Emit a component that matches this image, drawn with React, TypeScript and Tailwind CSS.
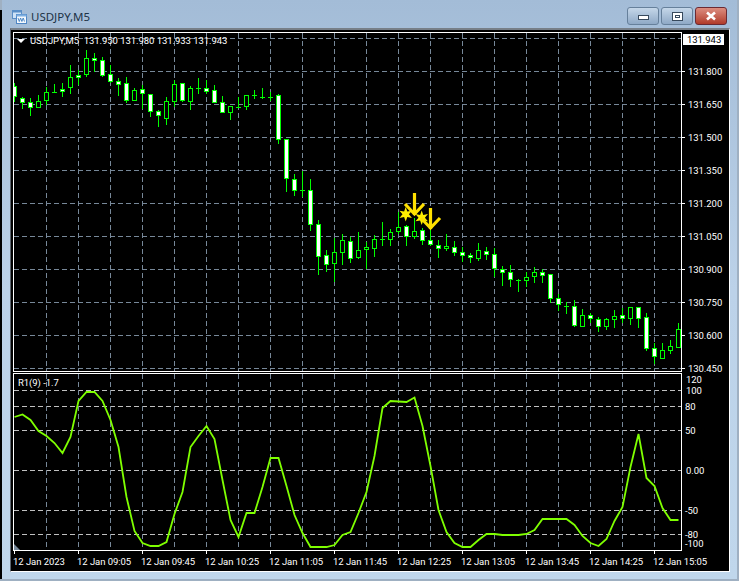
const candles: [number, number, number, number, number][] = [
  [83, 102, 86, 96, 1], [97, 109, 98, 102, 1], [98, 116, 102, 107, 1], [95, 108, 101, 107, 0],
  [87, 105, 92, 100, 0], [84, 93, 92, 92, 2], [83, 97, 89, 91, 1], [65, 94, 77, 87, 0],
  [70, 85, 75, 77, 1], [50, 77, 58, 74, 0], [53, 72, 58, 60, 1], [57, 77, 60, 75, 1],
  [65, 83, 74, 81, 1], [78, 96, 81, 84, 1], [77, 103, 83, 100, 1], [88, 101, 90, 100, 0],
  [85, 109, 89, 93, 1], [94, 117, 94, 111, 1], [110, 127, 111, 115, 1], [97, 125, 101, 118, 0],
  [80, 107, 84, 101, 0], [83, 102, 83, 100, 1], [86, 110, 88, 101, 0], [78, 94, 88, 88, 2],
  [80, 94, 88, 91, 1], [85, 103, 90, 102, 1], [96, 113, 102, 112, 1], [106, 120, 106, 112, 0],
  [97, 108, 107, 107, 2], [95, 110, 95, 106, 0], [90, 99, 95, 95, 2], [88, 99, 97, 97, 2],
  [92, 101, 97, 97, 2], [94, 144, 95, 139, 1], [139, 192, 139, 178, 1], [174, 196, 179, 190, 1],
  [171, 197, 190, 190, 2], [179, 231, 190, 224, 1], [220, 275, 224, 256, 1], [250, 272, 255, 264, 1],
  [238, 282, 252, 263, 0], [234, 265, 240, 252, 0], [237, 263, 241, 258, 1], [232, 259, 250, 257, 0],
  [242, 269, 247, 249, 0], [235, 257, 239, 248, 0], [222, 246, 239, 239, 2], [229, 246, 232, 239, 0],
  [212, 234, 227, 231, 0], [225, 246, 226, 236, 1], [218, 239, 231, 236, 0], [228, 245, 230, 240, 1],
  [230, 246, 240, 244, 1], [240, 258, 245, 248, 1], [234, 251, 246, 248, 0], [241, 256, 247, 252, 1],
  [247, 262, 252, 255, 1], [253, 263, 255, 257, 1], [243, 261, 250, 258, 0], [247, 260, 251, 254, 1],
  [248, 277, 254, 268, 1], [266, 286, 269, 272, 1], [265, 287, 272, 279, 1], [279, 292, 280, 280, 2],
  [272, 287, 277, 280, 0], [267, 283, 272, 276, 0], [269, 283, 272, 275, 1], [274, 303, 274, 298, 1],
  [294, 311, 298, 304, 1], [302, 314, 306, 306, 2], [300, 327, 306, 325, 1], [309, 327, 315, 326, 0],
  [313, 323, 315, 318, 1], [317, 332, 319, 326, 1], [318, 330, 319, 326, 0], [310, 328, 316, 319, 0],
  [308, 323, 315, 318, 1], [307, 325, 307, 318, 0], [307, 328, 307, 318, 1], [313, 351, 317, 348, 1],
  [343, 364, 348, 356, 1], [343, 359, 350, 358, 0], [340, 354, 346, 350, 0], [323, 348, 329, 347, 0],
];

const r1 = [
  417, 414.5, 420, 431, 436, 443, 453, 437, 401, 392, 392, 401, 420, 447, 497, 531, 543, 546, 546, 542,
  514, 492, 447, 436, 426, 439, 480, 520, 537, 513, 513, 487, 458, 458, 486, 515, 533, 547, 547, 547,
  545, 535, 532, 513, 492, 456, 408, 401, 401.5, 402, 397.5, 426, 466, 510, 532, 543, 547, 547, 540, 534,
  534, 535, 535, 535, 534, 530, 519, 519, 519, 519, 525, 536, 543, 546, 539, 521, 507, 467, 434, 478,
  486, 508, 520, 520,
];

const gridX = Array.from({ length: 20 }, (_, i) => 46 + i * 32);
const priceY = [38, 71, 104, 137, 170, 203, 236, 269, 302, 335, 368];
const levelY = [390, 406, 430, 470, 510, 534];

const prices = ["131.800", "131.650", "131.500", "131.350", "131.200", "131.050", "130.900", "130.750", "130.600", "130.450"];
const times = ["2023", "09:05", "09:45", "10:25", "11:05", "11:45", "12:25", "13:05", "13:45", "14:25", "15:05"];

function VerticalGrid({ y1, y2 }: { y1: number; y2: number }) {
  return (
    <>
      {gridX.map((x) => (
        <line key={x} x1={x + 0.5} x2={x + 0.5} y1={y1} y2={y2} stroke="#778899" strokeDasharray="5 3" />
      ))}
    </>
  );
}

function Star({ x, y }: { x: number; y: number }) {
  const pts = Array.from({ length: 12 }, (_, i) => {
    const a = (i * Math.PI) / 6 - Math.PI / 2;
    const r = i % 2 ? 3.2 : 7.2;
    return `${x + r * Math.cos(a)},${y + r * Math.sin(a)}`;
  }).join(" ");
  return <polygon points={pts} fill="#ffee00" />;
}

function Arrow({ x, top, tip }: { x: number; top: number; tip: number }) {
  return (
    <g fill="none" stroke="#ffe000" strokeWidth="3.2">
      <line x1={x} x2={x} y1={top} y2={tip - 1} />
      <polyline points={`${x - 9.5},${tip - 12} ${x},${tip - 2} ${x + 9.5},${tip - 12}`} />
    </g>
  );
}

function PriceChart() {
  return (
    <svg className="block h-[338px] w-[667px]" viewBox="14 33 667 338">
      <g shapeRendering="crispEdges">
        {priceY.map((y) => (
          <line key={y} x1="14" x2="681" y1={y + 0.5} y2={y + 0.5} stroke="#778899" strokeDasharray="5 3" />
        ))}
        <VerticalGrid y1={33} y2={371} />
        {candles.map(([wt, wb, bt, bb, kind], i) => {
          const c = 14 + i * 8;
          return (
            <g key={i}>
              <line x1={c + 0.5} x2={c + 0.5} y1={wt} y2={wb} stroke="#00ff00" />
              {kind === 2 ? (
                <line x1={c - 2} x2={c + 3} y1={bt + 0.5} y2={bt + 0.5} stroke="#00ff00" />
              ) : (
                <rect x={c - 1.5} y={bt + 0.5} width="4" height={bb - bt} fill={kind === 1 ? "#ffffff" : "#000000"} stroke="#00ff00" />
              )}
            </g>
          );
        })}
      </g>
      <Star x={405.7} y={214.3} />
      <Star x={421.7} y={217.7} />
      <Arrow x={414.5} top={193} tip={216} />
      <Arrow x={430.5} top={208} tip={230} />
    </svg>
  );
}

function IndicatorChart() {
  return (
    <svg className="block h-[176px] w-[667px]" viewBox="14 374 667 176">
      <g shapeRendering="crispEdges">
        {levelY.map((y) => (
          <line key={y} x1="14" x2="681" y1={y + 0.5} y2={y + 0.5} stroke="#c0c0c0" strokeDasharray="5 3" />
        ))}
        <VerticalGrid y1={374} y2={550} />
      </g>
      <polyline
        points={r1.map((y, i) => `${14.5 + i * 8},${y}`).join(" ")}
        fill="none"
        stroke="#7fff00"
        strokeWidth="1.8"
      />
      <polygon points="14,544 14,550 20,550" fill="#778899" />
    </svg>
  );
}

export default function App() {
  return (
    <div className="flex h-[581px] w-[739px] overflow-hidden bg-[#9fb0c2] font-['Roboto',sans-serif] text-[9.5px] leading-[11px] tracking-[-0.05px] text-white">
      <div className="mt-[10px] mb-[2px] w-[2px] bg-black" />

      <div className="flex h-[579px] w-[735px] flex-col bg-gradient-to-b from-[#a3bcd7] via-[#bcd2e9] to-[#c0d7ec]">
        {/* title bar */}
        <div className="flex h-[28px] shrink-0 items-start pl-[10px]">
          <svg className="mt-[10px] h-[14px] w-[15px]" viewBox="0 0 15 14">
            <rect x="0.5" y="0.5" width="9" height="8" fill="#cfe3f7" stroke="#5b8fc7" />
            <rect x="0.5" y="0.5" width="9" height="2" fill="#5b8fc7" />
            <rect x="4.5" y="4.5" width="10" height="9" fill="#f4f8fd" stroke="#4f86c4" />
            <rect x="4.5" y="4.5" width="10" height="2" fill="#7fb0e2" />
            <path d="M6 8l1.3 3.5L8.6 8l1.3 3.5L11.2 8l1.3 3.5" fill="none" stroke="#3f7fc0" strokeWidth="0.9" />
          </svg>
          <span className="mt-[8px] ml-[4px] font-['Noto_Sans',sans-serif] text-[11.5px] leading-[18px] tracking-normal text-[#1d3347]">USDJPY,M5</span>
          <div className="mt-[7px] ml-auto mr-[10px] flex gap-[2px]">
            <button className="flex h-[18px] w-[32px] items-center justify-center rounded-[3px] border border-[#66809b] bg-gradient-to-b from-[#c5d7e9] to-[#8fa9c6]">
              <span className="mt-[3px] h-[5px] w-[11px] border border-[#37495c] bg-white" />
            </button>
            <button className="flex h-[18px] w-[32px] items-center justify-center rounded-[3px] border border-[#66809b] bg-gradient-to-b from-[#c5d7e9] to-[#8fa9c6]">
              <span className="flex h-[9px] w-[11px] items-center justify-center border border-[#37495c] bg-white">
                <span className="h-[3px] w-[5px] border border-[#37495c]" />
              </span>
            </button>
            <button className="flex h-[18px] w-[32px] items-center justify-center rounded-[3px] border border-[#6b2a33] bg-gradient-to-b from-[#dc8d80] to-[#b03a2a]">
              <svg className="h-[10px] w-[12px]" viewBox="0 0 12 10">
                <path d="M2 1.5l8 7M10 1.5l-8 7" stroke="#ffffff" strokeWidth="2.6" fill="none" />
              </svg>
            </button>
          </div>
        </div>

        {/* client area */}
        <div className="ml-[8px] mr-[7px] border-t-[2px] border-l border-b border-r border-t-[#777f88] border-l-[#5d6670] border-b-white border-r-white bg-black">
          <div className="flex h-[541px] w-[717px] pl-[2px] pt-[2px]">
            <div className="flex w-[669px] flex-col">
              <div className="relative h-[340px] border border-white">
                <PriceChart />
                <div className="absolute left-[3px] top-[2px] flex h-[11px] items-center gap-[5px] whitespace-pre">
                  <svg className="h-[4px] w-[8px]" viewBox="0 0 8 4">
                    <path d="M0 0h8L4 4z" fill="#ffffff" />
                  </svg>
                  <span>USDJPY,M5  131.950 131.980 131.933 131.943</span>
                </div>
              </div>
              <div className="relative mt-[1px] h-[178px] border border-white">
                <IndicatorChart />
                <span className="absolute left-[4px] top-[3px]">R1(9) -1.7</span>
              </div>
              <div className="flex h-[20px]">
                {times.map((t) => (
                  <div key={t} className="w-[64px] shrink-0 whitespace-nowrap">
                    <div className="ml-[1px] h-[3px] w-px bg-white" />
                    <div className="mt-[2px]">12 Jan {t}</div>
                  </div>
                ))}
              </div>
            </div>

            <div className="flex w-[46px] flex-col">
              <div className="mt-[2px] mr-[4px] ml-[1px] h-[11px] bg-white pl-[4px] text-black">131.943</div>
              <div className="mt-[21px] flex flex-col gap-[22px]">
                {prices.map((p) => (
                  <div key={p} className="flex h-[11px] items-center">
                    <span className="h-px w-[3px] bg-white" />
                    <span className="ml-[3px]">{p}</span>
                  </div>
                ))}
              </div>
              <div className="pl-[3px]">
                <div className="pl-[1px]">120</div>
                <div className="pl-[1px]">100</div>
                <div className="mt-[5px]">80</div>
                <div className="mt-[13px]">50</div>
                <div className="mt-[29px] pl-[1px]">0.00</div>
                <div className="mt-[29px]">-50</div>
                <div className="mt-[14px] leading-[9px]">-80</div>
                <div className="leading-[9px]">-100</div>
              </div>
            </div>
          </div>
        </div>
      </div>
    </div>
  );
}
